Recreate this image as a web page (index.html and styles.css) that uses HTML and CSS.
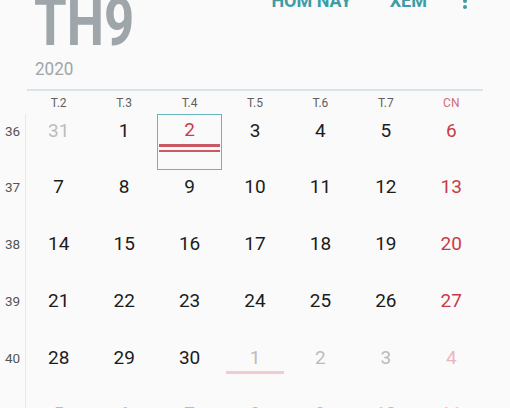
FILE: index.html
```html
<!DOCTYPE html>
<html lang="vi">
<head>
<meta charset="utf-8">
<title>Lịch</title>
<link rel="stylesheet" href="styles.css">
</head>
<body>
<div class="page">
  <header class="top">
    <div class="title">
      <div class="month">TH9</div>
      <div class="year">2020</div>
    </div>
    <div class="actions">
      <span class="act today">HÔM NAY</span>
      <span class="act view">XEM</span>
      <svg class="more" width="8" height="20" viewBox="0 0 8 20"><circle cx="4" cy="1" r="2"/><circle cx="4" cy="7" r="2"/><circle cx="4" cy="13" r="2"/></svg>
    </div>
  </header>
  <div class="divider"></div>
  <div class="cal">
    <div class="head"></div>
    <div class="head">T.2</div>
    <div class="head">T.3</div>
    <div class="head">T.4</div>
    <div class="head">T.5</div>
    <div class="head">T.6</div>
    <div class="head">T.7</div>
    <div class="head sun">CN</div>

    <div class="wk">36</div>
    <div class="day other">31</div>
    <div class="day">1</div>
    <div class="day sun selected">2<div class="events"><div class="ev"></div><div class="ev"></div></div></div>
    <div class="day">3</div>
    <div class="day">4</div>
    <div class="day">5</div>
    <div class="day sun">6</div>

    <div class="wk">37</div>
    <div class="day">7</div>
    <div class="day">8</div>
    <div class="day">9</div>
    <div class="day">10</div>
    <div class="day">11</div>
    <div class="day">12</div>
    <div class="day sun">13</div>

    <div class="wk">38</div>
    <div class="day">14</div>
    <div class="day">15</div>
    <div class="day">16</div>
    <div class="day">17</div>
    <div class="day">18</div>
    <div class="day">19</div>
    <div class="day sun">20</div>

    <div class="wk">39</div>
    <div class="day">21</div>
    <div class="day">22</div>
    <div class="day">23</div>
    <div class="day">24</div>
    <div class="day">25</div>
    <div class="day">26</div>
    <div class="day sun">27</div>

    <div class="wk">40</div>
    <div class="day">28</div>
    <div class="day">29</div>
    <div class="day">30</div>
    <div class="day next">1<div class="mark"></div></div>
    <div class="day next">2</div>
    <div class="day next">3</div>
    <div class="day next sun">4</div>

    <div class="wk">41</div>
    <div class="day next">5</div>
    <div class="day next">6</div>
    <div class="day next">7</div>
    <div class="day next">8</div>
    <div class="day next">9</div>
    <div class="day next">10</div>
    <div class="day next sun">11</div>
  </div>
</div>
</body>
</html>
```
FILE: styles.css
```css
html, body {
  margin: 0;
  padding: 0;
  background: #fafafa;
}
body {
  font-family: Roboto, "Noto Sans", "DejaVu Sans", sans-serif;
  width: 510px;
  height: 408px;
  overflow: hidden;
}
.page {
  width: 510px;
}
.top {
  display: flex;
  justify-content: space-between;
  align-items: flex-start;
  height: 89px;
  padding: 0 41px 0 35px;
}
.month {
  font-size: 66px;
  font-weight: 700;
  line-height: 1;
  color: #9ea6a9;
  margin-top: -10.5px;
  margin-left: -1px;
  transform: scaleX(0.8);
  transform-origin: left center;
}
.year {
  font-size: 19px;
  line-height: 1;
  color: #9ea6a9;
  margin-top: 3.5px;
  transform: scaleX(0.9);
  transform-origin: left center;
}
.actions {
  display: flex;
  align-items: flex-start;
  margin-top: -8px;
}
.act {
  font-size: 18px;
  font-weight: 700;
  line-height: 1;
  color: #3f9ca6;
}
.today {
  margin-right: 38px;
}
.view {
  margin-right: 34px;
}
.more {
  fill: #3f9ca6;
  margin-top: 2px;
}
.divider {
  margin-left: 27px;
  width: 456px;
  height: 1.5px;
  background: #d9e3ea;
}
.cal {
  display: grid;
  grid-template-columns: 26px repeat(7, 1fr);
  grid-template-rows: 22px repeat(6, 56.75px);
  width: 484px;
  margin-top: 1px;
}
.head {
  font-size: 12px;
  line-height: 22px;
  text-align: center;
  color: #5e5e5e;
}
.head.sun {
  color: #d36c78;
}
.wk {
  border-right: 1.5px solid #e8e8e8;
  box-sizing: border-box;
  font-size: 13.5px;
  color: #555;
  text-align: center;
  padding-top: 8px;
  line-height: 18px;
}
.day {
  box-sizing: border-box;
  font-size: 19px;
  line-height: 22px;
  padding-top: 6px;
  text-align: center;
  color: #1c1c1c;
}
.day.sun {
  color: #c93a48;
}
.day.other {
  color: #bdbdbd;
}
.day.next {
  color: #bbbbbb;
}
.day.next.sun {
  color: #ecb5bc;
}
.selected {
  border: 1.5px solid #6ab5bd;
  padding-top: 4.5px;
  height: 56px;
}
.events {
  display: flex;
  flex-direction: column;
  gap: 3px;
  margin: 3px 1.5px 0;
}
.ev {
  height: 2.5px;
  background: #c95a65;
}
.mark {
  height: 2.5px;
  margin: 2.5px 4px 0;
  background: #f2cbd0;
}
```
